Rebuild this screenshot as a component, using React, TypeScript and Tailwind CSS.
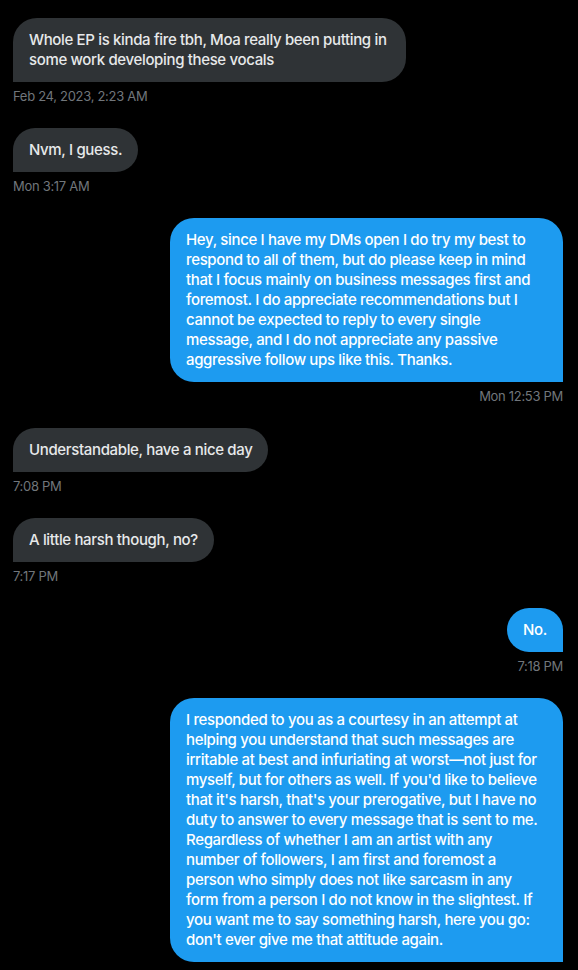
import React from "react";

type Msg = { side: "in" | "out"; lines: string[]; time: string; wide?: boolean };

const messages: Msg[] = [
  {
    side: "in",
    lines: ["Whole EP is kinda fire tbh, Moa really been putting in", "some work developing these vocals"],
    time: "Feb 24, 2023, 2:23 AM",
    wide: true,
  },
  { side: "in", lines: ["Nvm, I guess."], time: "Mon 3:17 AM" },
  {
    side: "out",
    lines: [
      "Hey, since I have my DMs open I do try my best to",
      "respond to all of them, but do please keep in mind",
      "that I focus mainly on business messages first and",
      "foremost. I do appreciate recommendations but I",
      "cannot be expected to reply to every single",
      "message, and I do not appreciate any passive",
      "aggressive follow ups like this. Thanks.",
    ],
    time: "Mon 12:53 PM",
    wide: true,
  },
  { side: "in", lines: ["Understandable, have a nice day"], time: "7:08 PM" },
  { side: "in", lines: ["A little harsh though, no?"], time: "7:17 PM" },
  { side: "out", lines: ["No."], time: "7:18 PM" },
  {
    side: "out",
    lines: [
      "I responded to you as a courtesy in an attempt at",
      "helping you understand that such messages are",
      "irritable at best and infuriating at worst\u2014not just for",
      "myself, but for others as well. If you'd like to believe",
      "that it's harsh, that's your prerogative, but I have no",
      "duty to answer to every message that is sent to me.",
      "Regardless of whether I am an artist with any",
      "number of followers, I am first and foremost a",
      "person who simply does not like sarcasm in any",
      "form from a person I do not know in the slightest. If",
      "you want me to say something harsh, here you go:",
      "don't ever give me that attitude again.",
    ],
    time: "7:18 PM",
    wide: true,
  },
];

function Bubble({ m, last }: { m: Msg; last: boolean }) {
  const out = m.side === "out";
  return (
    <div className={`flex flex-col ${out ? "items-end" : "items-start"} ${last ? "" : "pb-6"}`}>
      <div
        className={`px-4 py-3 text-[15px] leading-5 font-medium tracking-[-0.35px] whitespace-nowrap ${
          m.wide ? "w-[393px]" : "w-fit"
        } ${
          out
            ? "bg-[#1d9bf0] text-white rounded-3xl rounded-br-none"
            : "bg-[#2f3336] text-[#e7e9ea] rounded-3xl rounded-bl-none"
        }`}
      >
        {m.lines.map((l, i) => (
          <div key={i}>{l}</div>
        ))}
      </div>
      {!last && (
        <div className="mt-1.5 text-[13px] leading-4 tracking-[-0.3px] text-[#71767b]">{m.time}</div>
      )}
    </div>
  );
}

export default function App() {
  return (
    <div
      className="w-[578px] h-[970px] overflow-hidden bg-black pt-[18px] pl-[13px] pr-[15px]"
      style={{ fontFamily: "Inter, 'Noto Sans', sans-serif" }}
    >
      {messages.map((m, i) => (
        <Bubble key={i} m={m} last={i === messages.length - 1} />
      ))}
    </div>
  );
}
